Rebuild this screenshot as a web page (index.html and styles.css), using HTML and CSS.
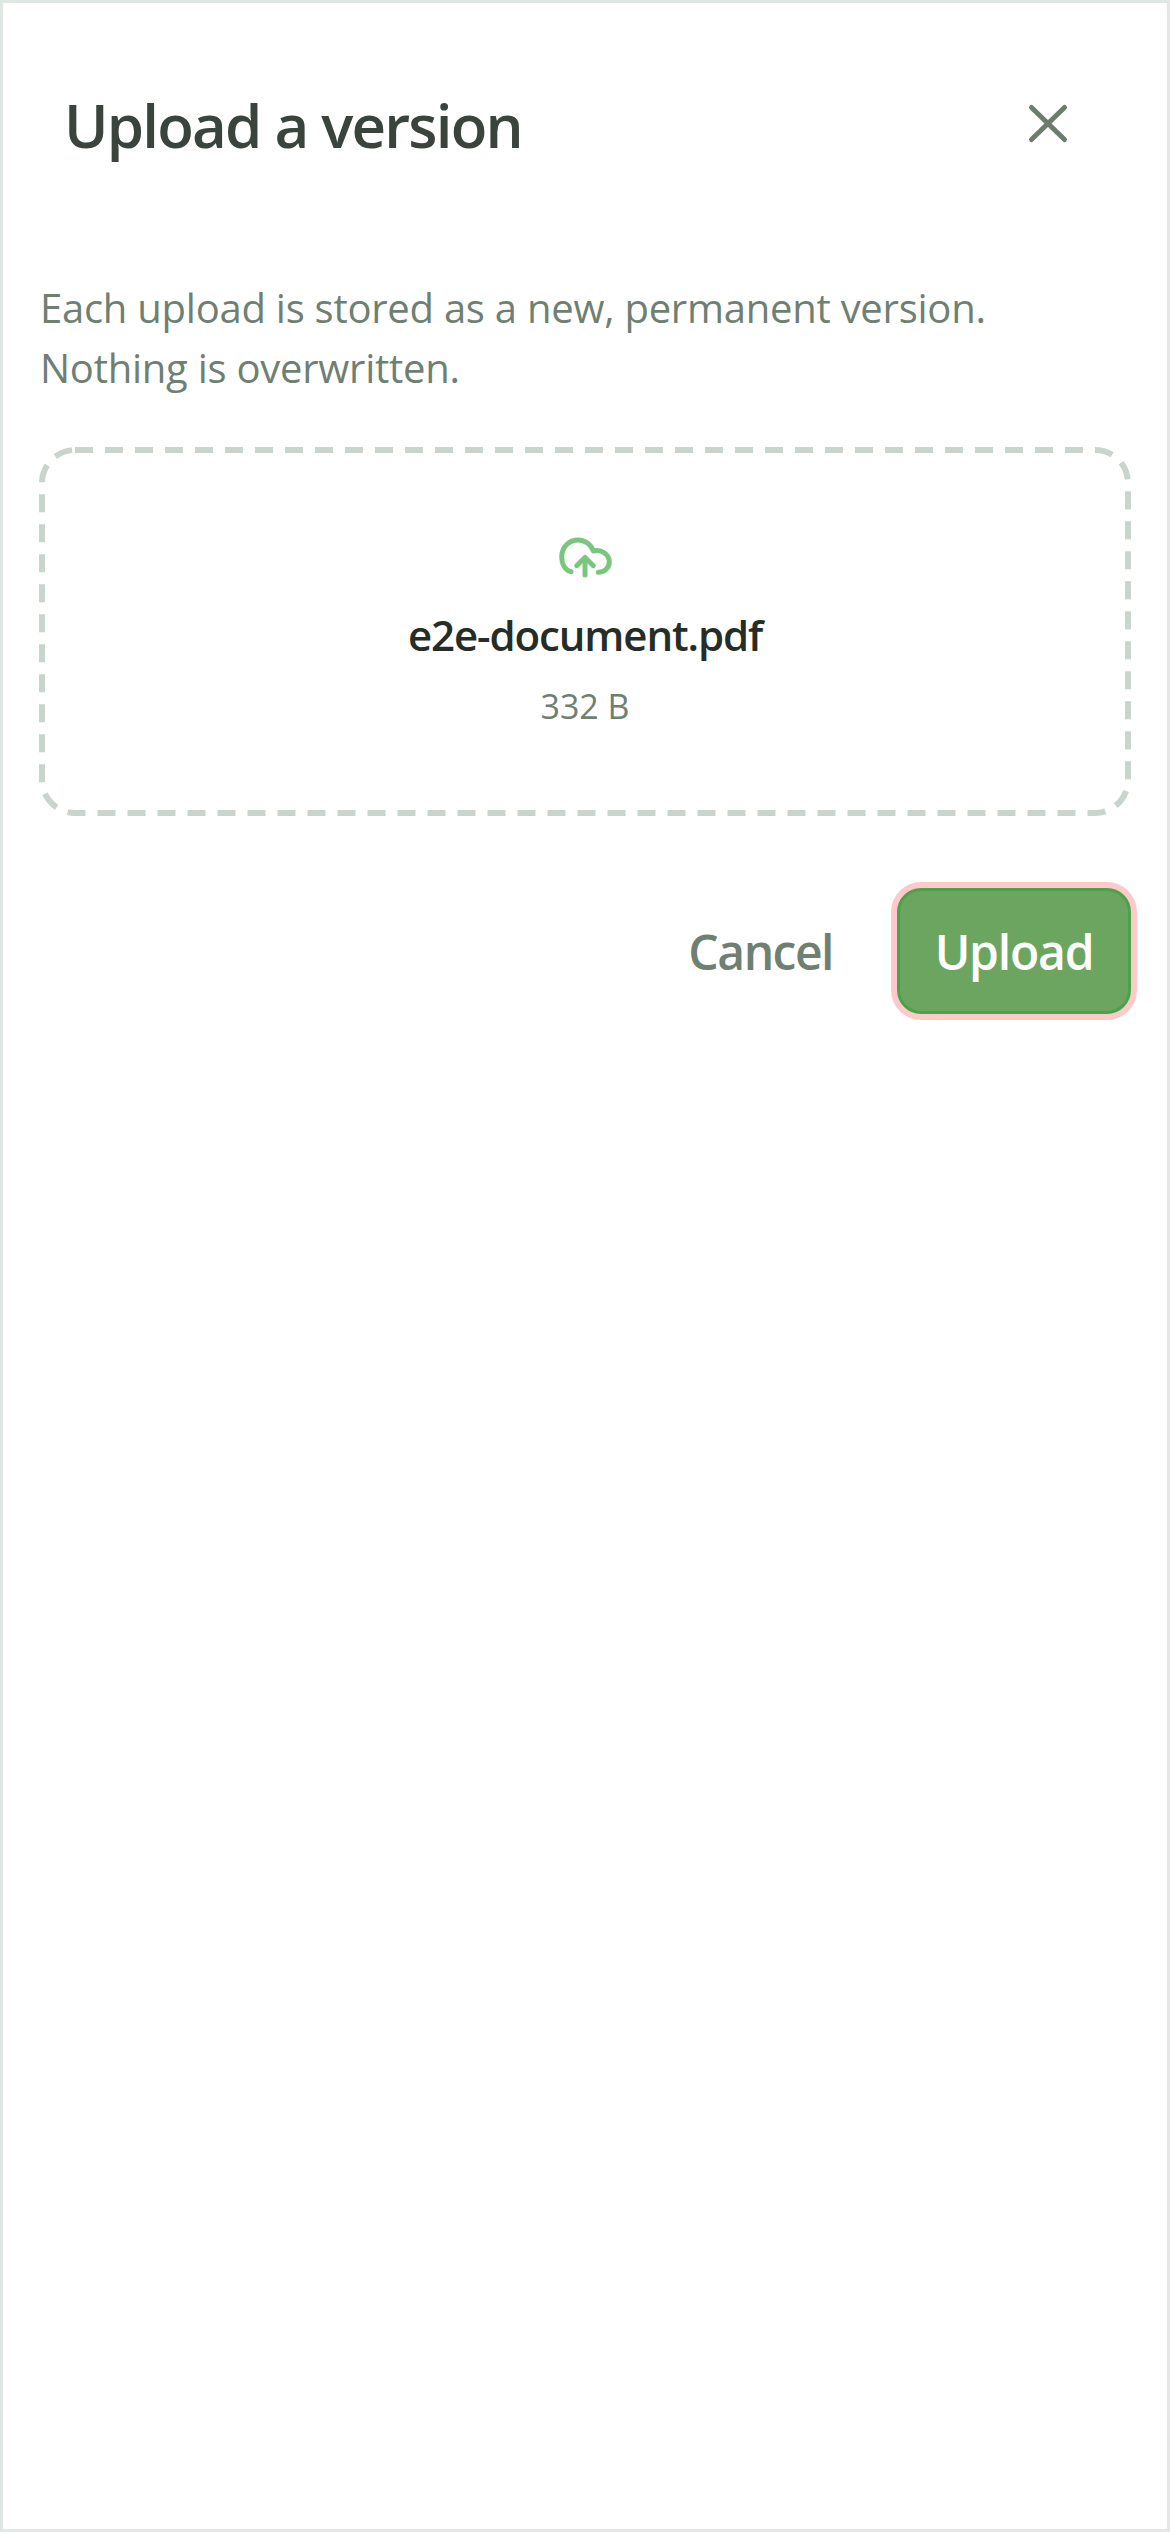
FILE: index.html
```html
<!DOCTYPE html>
<html lang="en">

<head>
    <meta charset="UTF-8" />
    <meta name="viewport" content="width=device-width, initial-scale=1.0" />
    <title>Upload a version</title>
    <link rel="stylesheet" href="styles.css">
</head>

<body>

    <section class="sheet">
        <header class="sheet-header">
            <h1>Upload a version</h1>
            <button class="close" aria-label="Close">
                <svg width="48" height="48" viewBox="0 0 48 48" fill="none" stroke="currentColor" stroke-width="5" stroke-linecap="round">
                    <path d="M7.5 6.5L40.5 38.5" />
                    <path d="M40.5 6.5L7.5 38.5" />
                </svg>
            </button>
        </header>

        <p class="intro">Each upload is stored as a new, permanent version. Nothing is overwritten.</p>

        <div class="dropzone">
            <!-- dashed outline, css dashes come out too short -->
            <svg class="dash" width="1092" height="369" viewBox="0 0 1092 369" fill="none">
                <rect x="3" y="3" width="1086" height="363" rx="33" stroke="#c8d4cc" stroke-width="6" stroke-dasharray="18 12" />
            </svg>
            <svg class="cloud" width="60" height="50" viewBox="0 0 60 50" fill="none" stroke="currentColor" stroke-width="5" stroke-linecap="round" stroke-linejoin="round">
                <path d="M16 37.7C10 36 6.7 30 6.7 23C6.7 13 14 6 23.3 6C30 6 36 10.5 38.3 17C47 15 54.3 20.5 54.3 28C54.3 33.5 49.5 38.3 43.3 38.3" />
                <path d="M30 41V24.3" />
                <path d="M21.7 31.7L30 23.5L38.3 31.7" />
            </svg>
            <div class="file-name">e2e-document.pdf</div>
            <div class="file-size">332 B</div>
        </div>

        <div class="actions">
            <button class="cancel">Cancel</button>
            <button class="upload">Upload</button>
        </div>
    </section>

</body>

</html>
```
FILE: styles.css
```css
* {
    box-sizing: border-box;
}

body {
    font-family: "Open Sans", "Noto Sans", sans-serif;
    margin: 0;
    background: #fff;
}

.sheet {
    height: 2532px;
    padding: 0 36px;
    border: 3px solid #e0e8e4;
}

.sheet-header {
    display: flex;
    justify-content: space-between;
    align-items: center;
    height: 244px;
    padding: 0 59px 0 25px;
}

.sheet-header h1 {
    margin: 0;
    font-size: 60px;
    font-weight: 600;
    letter-spacing: -1.8px;
    color: #3a443c;
}

.close {
    display: flex;
    padding: 0;
    background: none;
    border: none;
    color: #6b7d6e;
}

.intro {
    margin: 31px 0 0 1px;
    max-width: 1000px;
    font-size: 40px;
    line-height: 60px;
    letter-spacing: -0.25px;
    color: #6f7f72;
}

.dropzone {
    position: relative;
    display: flex;
    flex-direction: column;
    align-items: center;
    height: 369px;
    margin-top: 49px;
    padding-top: 87px;
}

.dash {
    position: absolute;
    top: 0;
    left: 0;
}

.cloud {
    color: #7bc67e;
}

.file-name {
    margin-top: 21px;
    font-size: 42px;
    line-height: 60px;
    font-weight: 600;
    letter-spacing: -1.1px;
    color: #252d27;
}

.file-size {
    margin-top: 17px;
    font-size: 34px;
    line-height: 48px;
    color: #6f7f72;
}

.actions {
    display: flex;
    justify-content: flex-end;
    align-items: center;
    gap: 64px;
    margin-top: 72px;
}

.actions button {
    font-family: inherit;
    font-size: 48px;
    font-weight: 600;
    letter-spacing: -1.2px;
}

.actions .cancel {
    padding: 0;
    background: none;
    border: none;
    letter-spacing: -1.5px;
    color: #6f7f72;
}

.upload {
    width: 234px;
    height: 126px;
    padding: 0;
    background: #6ca55f;
    border: 3px solid #4aa34a;
    border-radius: 24px;
    box-shadow: 0 0 0 6px #ffc9c9;
    color: #fff;
}
```
